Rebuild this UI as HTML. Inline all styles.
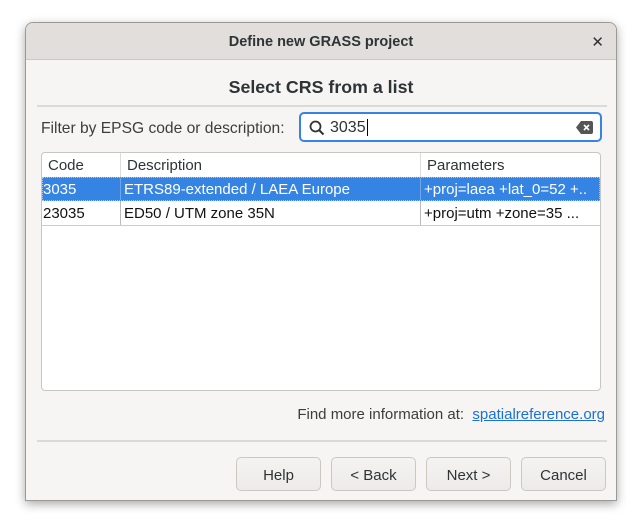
<!DOCTYPE html>
<html><head><style>
*{box-sizing:border-box;margin:0;padding:0}
body{width:642px;height:530px;background:#fff;font-family:"Liberation Sans","DejaVu Sans",sans-serif;position:relative;overflow:hidden;color:#2e3436}
.win{position:absolute;left:25px;top:22px;width:592px;height:479px;background:#f6f5f4;border:1px solid #9a9996;border-radius:8px 8px 0 0;box-shadow:0 3px 10px rgba(0,0,0,.35);overflow:hidden}
.tb{position:absolute;left:0;top:0;width:100%;height:37px;background:#e1dedb;border-bottom:1px solid #cdc7c2;text-align:center;line-height:39px;font-weight:bold;font-size:14.5px;color:#2e3436}
.x{position:absolute;right:12px;top:0;font-size:15px}
.a{position:absolute}
.sep{position:absolute;left:11px;width:570px;height:2px;background:#dcd9d6}
.tbl{position:absolute;left:15px;top:129px;width:560px;height:239px;background:#fff;border:1px solid #c9c5c1;border-radius:4px;overflow:hidden;font-size:15px}
.r{position:absolute;left:0;width:100%;height:24px;line-height:24px}
.c{position:absolute;top:0;height:100%;padding-left:3px;white-space:nowrap;overflow:hidden}
.h .c{padding-left:6px;line-height:25px}
.btn{position:absolute;top:434px;width:85px;height:34px;border:1px solid #cdc7c2;border-radius:5px;background:linear-gradient(#f4f3f2,#edebe9);text-align:center;line-height:35px;font-size:15px}
</style></head><body>
<div class="win">
<div class="tb">Define new GRASS project<span class="x">✕</span></div>
<div class="a" style="left:0;width:100%;top:54px;text-align:center;font-weight:bold;font-size:17.8px">Select CRS from a list</div>
<div class="sep" style="top:82px"></div>
<div class="a" style="left:15px;top:97px;font-size:15.6px;color:#3d3d3d">Filter by EPSG code or description:</div>
<div class="a" style="left:273px;top:89px;width:303px;height:30px;border:2px solid #3584e4;border-radius:5px;background:#fff">
<svg class="a" style="left:8px;top:6px" width="16" height="16" viewBox="0 0 16 16"><circle cx="6.5" cy="6.5" r="5" fill="none" stroke="#2e3436" stroke-width="1.8"/><path d="M10 10l4.5 4.5" stroke="#2e3436" stroke-width="2"/></svg>
<span class="a" style="left:29px;top:5px;font-size:16px">3035<span style="border-left:1px solid #000;margin-left:1px"></span></span>
<svg class="a" style="right:7px;top:7px" width="17" height="13" viewBox="0 0 17 13"><path d="M5 0h10a2 2 0 0 1 2 2v9a2 2 0 0 1-2 2H5L0 6.5z" fill="#555"/><path d="M8 4l5 5M13 4l-5 5" stroke="#fff" stroke-width="1.6"/></svg>
</div>
<div class="tbl">
<div class="r h" style="top:0;color:#2e3436"><div class="c" style="left:0;width:79px;border-right:1px solid #ddd">Code</div><div class="c" style="left:79px;width:300px;border-right:1px solid #ddd">Description</div><div class="c" style="left:379px">Parameters</div></div>
<div class="r" style="top:24px;background:#3584e4;color:#fff;border:1px dotted #a8c8f0;line-height:23px"><div class="c" style="left:0;width:78px;padding-left:0;border-right:1px solid #6fa6ea">3035</div><div class="c" style="left:78px;width:300px;border-right:1px solid #6fa6ea">ETRS89-extended / LAEA Europe</div><div class="c" style="left:378px">+proj=laea +lat_0=52 +..</div></div>
<div class="r" style="top:48px;color:#111;border-bottom:1px solid #ccc;height:25px;line-height:26px"><div class="c" style="left:0;width:79px;padding-left:1px;border-right:1px solid #bbb">23035</div><div class="c" style="left:79px;width:300px;border-right:1px solid #bbb">ED50 / UTM zone 35N</div><div class="c" style="left:379px">+proj=utm +zone=35 ...</div></div>
</div>
<div class="a" style="right:11px;top:383px;font-size:15px;color:#3d3d3d">Find more information at:&nbsp; <span style="color:#1c71d8;text-decoration:underline">spatialreference.org</span></div>
<div class="sep" style="top:417px"></div>
<div class="btn" style="left:210px">Help</div>
<div class="btn" style="left:305px">&lt; Back</div>
<div class="btn" style="left:400px">Next &gt;</div>
<div class="btn" style="left:495px">Cancel</div>
</div>
</body></html>
